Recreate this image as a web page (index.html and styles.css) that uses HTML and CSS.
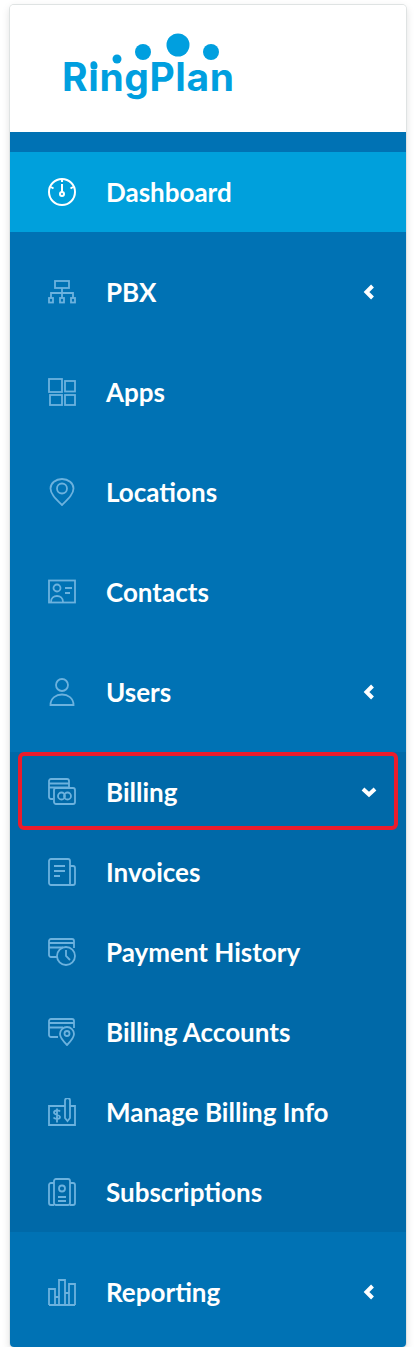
FILE: index.html
```html
<!DOCTYPE html>
<html lang="en">
<head>
    <meta charset="UTF-8">
    <meta name="viewport" content="width=device-width, initial-scale=1.0">
    <title>RingPlan - Menu</title>
    <link rel="stylesheet" href="styles.css">
</head>
<body>
    <aside class="sidebar">
        <div class="logo">
            <svg class="logo-dots" viewBox="0 0 180 60" width="180" height="60">
                <circle cx="31" cy="44" r="3.500"/>
                <circle cx="54" cy="37" r="4.500"/>
                <circle cx="80" cy="30" r="8"/>
                <circle cx="115" cy="23" r="11.500"/>
                <circle cx="148" cy="30" r="8"/>
            </svg>
            <span class="logo-text">RingPlan</span>
        </div>
        <nav class="menu">
            <a class="item active" href="#">
                <svg class="icon" viewBox="0 0 28 28"><circle cx="14" cy="14" r="13"/><path d="M14 1v3M3 9l2.500 1.500M25 9l-2.500 1.500M14 6v8"/><circle cx="14" cy="16" r="2"/></svg>
                <span>Dashboard</span>
            </a>
            <a class="item" href="#">
                <svg class="icon" viewBox="0 0 28 28"><rect x="7" y="3" width="14" height="7"/><path d="M14 10v10M3 20v-5h22v5"/><rect x="1" y="20" width="4" height="4.500"/><rect x="12" y="20" width="4" height="4.500"/><rect x="23" y="20" width="4" height="4.500"/></svg>
                <span>PBX</span>
                <svg class="chevron" viewBox="0 0 16 16"><path d="M11.500 2L5.500 8l6 6"/></svg>
            </a>
            <a class="item" href="#">
                <svg class="icon" viewBox="0 0 28 28"><rect x="1" y="1" width="13" height="13"/><rect x="17" y="3" width="10" height="10.500"/><rect x="2" y="17" width="12" height="10"/><rect x="17" y="17" width="10" height="10"/></svg>
                <span>Apps</span>
            </a>
            <a class="item" href="#">
                <svg class="icon" viewBox="0 0 28 28"><path d="M14 27C8 21 2.500 16 2.500 10.500a11.500 9.500 0 0 1 23 0C25.500 16 20 21 14 27z"/><circle cx="14" cy="10.500" r="5"/></svg>
                <span>Locations</span>
            </a>
            <a class="item" href="#">
                <svg class="icon" viewBox="0 0 28 28"><rect x="1" y="2.500" width="26" height="22"/><circle cx="9" cy="10" r="3.500"/><path d="M3 24c0-8 12-8 12 0M17 10h7M17 15h5"/></svg>
                <span>Contacts</span>
            </a>
            <a class="item" href="#">
                <svg class="icon" viewBox="0 0 28 28"><circle cx="14" cy="7" r="6"/><path d="M2.500 27c0-14 23-14 23 0z"/></svg>
                <span>Users</span>
                <svg class="chevron" viewBox="0 0 16 16"><path d="M11.500 2L5.500 8l6 6"/></svg>
            </a>
            <div class="group">
                <a class="item marked" href="#">
                    <svg class="icon" viewBox="0 0 28 28"><path d="M5 21H3a2 2 0 0 1-2-2V3a2 2 0 0 1 2-2h16a2 2 0 0 1 2 2v7M1 5.500h20M1 9.500h20"/><rect x="6" y="10" width="21" height="16" rx="2"/><circle cx="13.500" cy="18" r="3.500"/><circle cx="19.500" cy="18" r="3.500"/></svg>
                    <span>Billing</span>
                    <svg class="chevron" viewBox="0 0 16 16"><path d="M2 5l6 5.500L14 5"/></svg>
                </a>
                <a class="item" href="#">
                    <svg class="icon" viewBox="0 0 28 28"><path d="M22 27H3a2 2 0 0 1-2-2V3a2 2 0 0 1 2-2h17a2 2 0 0 1 2 2zM22 8h3a2 2 0 0 1 2 2v15a2 2 0 0 1-2 2h-3M6 8h11M6 13h11M6 18h6"/></svg>
                    <span>Invoices</span>
                </a>
                <a class="item" href="#">
                    <svg class="icon" viewBox="0 0 28 28"><path d="M9 19H3a2 2 0 0 1-2-2V3a2 2 0 0 1 2-2h21a2 2 0 0 1 2 2v7M1 5h25M1 9.500h14"/><circle cx="18" cy="18" r="9"/><path d="M18 12v6l4 4"/></svg>
                    <span>Payment History</span>
                </a>
                <a class="item" href="#">
                    <svg class="icon" viewBox="0 0 28 28"><path d="M10 19H3a2 2 0 0 1-2-2V3a2 2 0 0 1 2-2h21a2 2 0 0 1 2 2v7M1 5h25M1 9.500h14"/><path d="M19 27c-4-4-7-7-7-11a7 7 0 0 1 14 0c0 4-3 7-7 11z"/><circle cx="19" cy="15.500" r="2.500"/></svg>
                    <span>Billing Accounts</span>
                </a>
                <a class="item" href="#">
                    <svg class="icon" viewBox="0 0 28 28"><path d="M17 8H1v19h26V8h-5"/><path d="M17 20V2.500a2.500 2.500 0 0 1 5 0V20l-2.500 3z"/><path d="M12 13.500c-1-1.500-6-1.500-6 1s6 2 6 4.500-5 2.500-6.500 .5M9 10.500v14"/></svg>
                    <span>Manage Billing Info</span>
                </a>
                <a class="item" href="#">
                    <svg class="icon" viewBox="0 0 28 28"><rect x="6" y="1" width="16" height="26" rx="2"/><path d="M6 5H3a2 2 0 0 0-2 2v18a2 2 0 0 0 2 2h3M22 5h3a2 2 0 0 1 2 2v18a2 2 0 0 1-2 2h-3M10 19h8M10 23h8"/><circle cx="14" cy="10.500" r="3"/></svg>
                    <span>Subscriptions</span>
                </a>
            </div>
            <a class="item" href="#">
                <svg class="icon" viewBox="0 0 28 28"><path d="M1 27V11h6v16M11 27V2h6v25M21 27V6h6v21M1 27h26M7 19h4M17 15h4"/></svg>
                <span>Reporting</span>
                <svg class="chevron" viewBox="0 0 16 16"><path d="M11.500 2L5.500 8l6 6"/></svg>
            </a>
        </nav>
    </aside>
</body>
</html>
```

FILE: styles.css
```css
body {
    font-family: Lato, Arial, sans-serif;
    background-color: #fff;
    margin: 0;
    padding: 5px 10px 0;
}

.sidebar {
    width: 396px;
    border-radius: 4px;
    overflow: hidden;
    box-shadow: 0 0 0 1px #dfe3e3, 0 3px 8px rgba(0, 0, 0, 0.15);
}

.logo {
    position: relative;
    height: 127px;
    background-color: #fff;
}

.logo-dots {
    position: absolute;
    left: 53px;
    top: 17px;
    fill: #009fdf;
}

.logo-text {
    position: absolute;
    left: 52px;
    top: 48px;
    font-family: Inter, Lato, sans-serif;
    font-size: 39px;
    line-height: 48px;
    font-weight: 700;
    letter-spacing: 0.6px;
    color: #009fdf;
}

.menu {
    display: flex;
    flex-direction: column;
    gap: 20px;
    padding: 20px 0 15px;
    background-color: #0072b4;
}

.group {
    display: flex;
    flex-direction: column;
    background-color: #0069a8;
}

.item {
    position: relative;
    display: flex;
    align-items: center;
    height: 80px;
    flex: none;
    padding: 0 29px 0 38px;
    color: #fff;
    text-decoration: none;
    font-size: 26px;
    font-weight: 700;
}

.item span {
    flex: 1;
    margin-left: 30px;
}

.item.active {
    background-color: #00a0dc;
}

/* red annotation box round the Billing row */
.item.marked::after {
    content: "";
    position: absolute;
    left: 8px;
    right: 8px;
    top: 0;
    bottom: 2px;
    border: 4px solid #ea1c2c;
    border-radius: 6px;
}

.icon {
    width: 28px;
    height: 28px;
    flex: none;
    fill: none;
    stroke: #6cb2de;
    stroke-width: 1.8;
}

.item.active .icon {
    stroke: #fff;
    stroke-width: 2;
}

.chevron {
    width: 16px;
    height: 16px;
    flex: none;
    fill: none;
    stroke: #fff;
    stroke-width: 4;
}
```
